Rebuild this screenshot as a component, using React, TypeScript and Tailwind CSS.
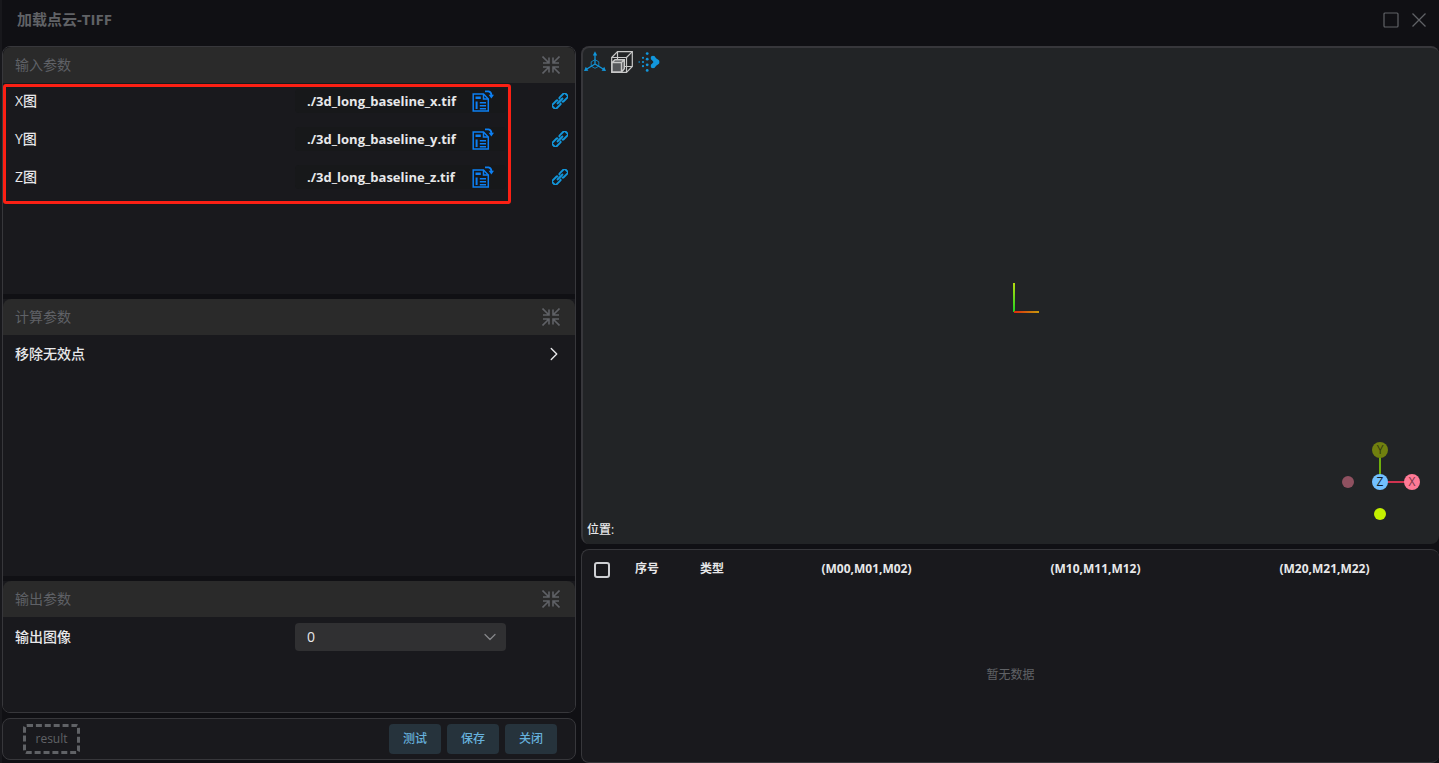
import { useState } from 'react';
import type { ReactNode } from 'react';
import { ChevronDown, ChevronRight } from 'lucide-react';

const inputFiles = [
    { id: 'x', label: 'X图', path: './3d_long_baseline_x.tif' },
    { id: 'y', label: 'Y图', path: './3d_long_baseline_y.tif' },
    { id: 'z', label: 'Z图', path: './3d_long_baseline_z.tif' },
];

const matrixColumns = ['(M00,M01,M02)', '(M10,M11,M12)', '(M20,M21,M22)'];

const actions = ['测试', '保存', '关闭'];

function MaximizeIcon() {
    return (
        <svg width="16" height="16" viewBox="0 0 16 16" fill="none" stroke="currentColor" strokeWidth="1.2">
            <rect x="1" y="1" width="14" height="14" rx="1" />
        </svg>
    );
}

function CloseIcon() {
    return (
        <svg width="16" height="16" viewBox="0 0 16 16" fill="none" stroke="currentColor" strokeWidth="1.3">
            <path d="M1.5 1.5L14.5 14.5M14.5 1.5L1.5 14.5" />
        </svg>
    );
}

function CollapseIcon() {
    return (
        <svg width="18" height="18" viewBox="0 0 18 18" fill="none" stroke="currentColor" strokeWidth="1.6">
            <path d="M0.5 0.5L7 7M1 7H7V1.5" />
            <path d="M17.5 0.5L11 7M17 7H11V1.5" />
            <path d="M0.5 17.5L7 11M1 11H7V16.5" />
            <path d="M17.5 17.5L11 11M17 11H11V16.5" />
        </svg>
    );
}

function FileIcon() {
    return (
        <svg width="22" height="22" viewBox="0 0 22 22" fill="none" stroke="currentColor" strokeWidth="1.5">
            <path d="M1.2 4H11.5L16.3 9V21H1.2Z" />
            <path d="M11.5 4V9H16.3" />
            <path d="M3.5 7.8H8.8" strokeWidth="2.6" />
            <path d="M4.6 11.5V19" strokeWidth="2" />
            <path d="M7.8 12.7H14M7.8 15.7H14M7.8 18.7H14" strokeWidth="1.5" />
            <path d="M13 1.4H16.5Q19.3 2 19.5 5.5" strokeWidth="1.8" />
            <path d="M16.6 4.8H22L19.4 8.4Z" fill="currentColor" stroke="none" />
        </svg>
    );
}

function LinkIcon() {
    return (
        <svg width="16" height="16" viewBox="0 0 16 16" fill="none" stroke="currentColor" strokeWidth="1.9">
            <g transform="rotate(-45 8 8)">
                <path d="M6.6 6.6V6.2Q6.6 5.2 5.6 5.2H-0.2Q-1.2 5.2 -1.2 6.2V9.8Q-1.2 10.8 -0.2 10.8H5.6Q6.6 10.8 6.6 9.8V9.4" />
                <path d="M9.4 6.6V6.2Q9.4 5.2 10.4 5.2H16.2Q17.2 5.2 17.2 6.2V9.8Q17.2 10.8 16.2 10.8H10.4Q9.4 10.8 9.4 9.8V9.4" />
                <path d="M3.8 8H12.2" />
            </g>
        </svg>
    );
}

function AxesIcon() {
    return (
        <svg width="22" height="22" viewBox="0 0 22 22" fill="none" stroke="currentColor" strokeWidth="1.3">
            <path d="M11 13V3M11 13L2 18.5M11 13L20 18.5" />
            <path d="M7.2 10.8L11 8.7L14.8 10.8V15.2L11 17.3L7.2 15.2Z" strokeWidth="0.8" />
            <path d="M11 0.3L13.2 4.4H8.8Z" fill="currentColor" stroke="none" />
            <path d="M0 20L1.8 15.8L4.4 19.8Z" fill="currentColor" stroke="none" />
            <path d="M22 20L20.2 15.8L17.6 19.8Z" fill="currentColor" stroke="none" />
        </svg>
    );
}

function CubeIcon() {
    return (
        <svg width="22" height="22" viewBox="0 0 22 22" fill="none" stroke="currentColor" strokeWidth="1.2">
            <path d="M0.7 6.5L6.5 0.7H21.3V15.5L15.5 21.3H0.7Z" />
            <path d="M0.7 6.5H15.5V21.3M15.5 6.5L21.3 0.7M6.5 0.7V9M21.3 15.5H13.5" />
            <path
                d="M1 11.5H10.5V21H1ZM1 11.5L4 8.7H13.3V17.8L10.5 21M10.5 11.5L13.3 8.7"
                fill="#55575a"
                strokeWidth="1.4"
            />
        </svg>
    );
}

function PointsIcon() {
    return (
        <svg width="22" height="22" viewBox="0 0 22 22" fill="currentColor">
            <circle cx="1.2" cy="11" r="0.8" />
            <circle cx="5" cy="6.8" r="1.1" />
            <circle cx="5" cy="11" r="1.1" />
            <circle cx="5" cy="15.2" r="1.1" />
            <circle cx="9.2" cy="2.6" r="1.4" />
            <circle cx="9.2" cy="8.2" r="1.4" />
            <circle cx="9.2" cy="13.8" r="1.4" />
            <circle cx="9.2" cy="19.4" r="1.4" />
            <circle cx="15" cy="7" r="2.3" />
            <circle cx="15" cy="15" r="2.3" />
            <circle cx="18.6" cy="11" r="2.8" />
            <path d="M13.5 8.5L16.5 5.5L20 9V13L16.5 16.5L13.5 13.5L15.5 11Z" />
        </svg>
    );
}

// 右下角的方向指示器
function OrientationGizmo() {
    return (
        <svg
            className="absolute bottom-5 right-4 font-['Open_Sans',sans-serif] text-[12px]"
            width="84"
            height="84"
            viewBox="0 0 84 84"
            textAnchor="middle"
        >
            <path d="M41 42V12" stroke="#6fae0c" strokeWidth="2" />
            <path d="M41 42H73" stroke="#cf3350" strokeWidth="2" />
            <circle cx="41" cy="10" r="8" fill="#71800f" />
            <circle cx="73" cy="42" r="8" fill="#ff7a96" />
            <circle cx="41" cy="42" r="8" fill="#72c0ff" />
            <circle cx="9" cy="42" r="6" fill="#8f5160" />
            <circle cx="41" cy="74" r="6" fill="#c4f000" />
            <text x="41" y="14" fill="#343b10">Y</text>
            <text x="73" y="46" fill="#7a3545">X</text>
            <text x="41" y="46" fill="#111c28">Z</text>
        </svg>
    );
}

function OriginAxes() {
    return (
        <svg width="60" height="60" viewBox="0 0 60 60">
            <defs>
                <linearGradient id="axisY" x1="0" y1="1" x2="0" y2="0">
                    <stop offset="0" stopColor="#21d321" />
                    <stop offset="1" stopColor="#b5dc10" />
                </linearGradient>
                <linearGradient id="axisX" x1="0" y1="0" x2="1" y2="0">
                    <stop offset="0" stopColor="#dc2a0c" />
                    <stop offset="1" stopColor="#c79a0c" />
                </linearGradient>
            </defs>
            <rect x="32" y="17" width="2" height="29" fill="url(#axisY)" />
            <rect x="33" y="45" width="25" height="2" fill="url(#axisX)" />
        </svg>
    );
}

interface SectionProps {
    title: string;
    children: ReactNode;
}

function Section({ title, children }: SectionProps) {
    return (
        <section className="bg-[#19191d]">
            <div className="flex h-9 items-center justify-between rounded-t-lg bg-[#2a2a2a] pl-3 pr-[15px] text-[#5f6166]">
                <h2 className="text-sm">{title}</h2>
                <button type="button" aria-label={`折叠${title}`}>
                    <CollapseIcon />
                </button>
            </div>
            {children}
        </section>
    );
}

export default function App() {
    const [output, setOutput] = useState('0');

    return (
        <div className="flex min-h-screen flex-col border-l-2 border-[#18181c] bg-[#101014] font-['Open_Sans','Noto_Sans_CJK_SC',sans-serif] text-sm text-[#e8e8ea]">
            <header className="flex h-[46px] items-center justify-between pb-1.5 pl-[15px] pr-3 text-[#606266]">
                <h1 className="text-[15px] font-bold">加载点云-TIFF</h1>
                <div className="flex items-center gap-3">
                    <button type="button" aria-label="最大化">
                        <MaximizeIcon />
                    </button>
                    <button type="button" aria-label="关闭窗口">
                        <CloseIcon />
                    </button>
                </div>
            </header>

            <main className="flex flex-1 gap-[5px]">
                {/* 左侧参数区 */}
                <div className="flex w-2/5 max-w-[574px] flex-col gap-[5px] pb-[3px]">
                    <div className="grid flex-1 grid-rows-[247fr_277fr_131fr] gap-[5px] overflow-hidden rounded-lg border border-[#37373b]">
                        <Section title="输入参数">
                            <div className="relative flex flex-col gap-0.5">
                                {inputFiles.map((file) => (
                                    <div
                                        key={file.id}
                                        className="grid h-9 grid-cols-[1fr_211px_62px] items-center pl-3 pr-[7px]"
                                    >
                                        <label htmlFor={`file-${file.id}`} className="font-medium">
                                            {file.label}
                                        </label>
                                        <div className="flex h-6 items-center rounded bg-[#17181a] pl-3 pr-3">
                                            <input
                                                id={`file-${file.id}`}
                                                type="text"
                                                readOnly
                                                value={file.path}
                                                className="min-w-0 flex-1 bg-transparent text-[13px] font-bold outline-none"
                                            />
                                            <button type="button" aria-label="选择文件" className="text-[#0d7ff2]">
                                                <FileIcon />
                                            </button>
                                        </div>
                                        <button
                                            type="button"
                                            aria-label="链接"
                                            className="justify-self-end text-[#1296db]"
                                        >
                                            <LinkIcon />
                                        </button>
                                    </div>
                                ))}
                                {/* 红色标注框 */}
                                <div className="pointer-events-none absolute -bottom-[9px] left-0 right-16 top-px rounded-[3px] border-[3px] border-[#fb2014]" />
                            </div>
                        </Section>

                        <Section title="计算参数">
                            <button
                                type="button"
                                className="flex h-[38px] w-full items-center justify-between pl-3 pr-2.5 font-medium"
                            >
                                移除无效点
                                <ChevronRight size={22} strokeWidth={1.5} />
                            </button>
                        </Section>

                        <Section title="输出参数">
                            <div className="grid h-10 grid-cols-[1fr_211px_62px] items-center pl-3 pr-[7px]">
                                <label htmlFor="output" className="font-medium">
                                    输出图像
                                </label>
                                <div className="relative">
                                    <select
                                        id="output"
                                        value={output}
                                        onChange={(e) => setOutput(e.target.value)}
                                        className="h-7 w-full appearance-none rounded bg-[#303032] px-3 font-medium outline-none"
                                    >
                                        <option value="0">0</option>
                                        <option value="1">1</option>
                                    </select>
                                    <ChevronDown
                                        size={20}
                                        strokeWidth={1.5}
                                        className="pointer-events-none absolute right-1.5 top-1 text-[#85868a]"
                                    />
                                </div>
                            </div>
                        </Section>
                    </div>

                    <footer className="flex h-[42px] items-center justify-between rounded-lg border border-[#37373b] bg-[#19191d] pl-5 pr-[18px] text-xs">
                        <span className="flex h-[30px] w-[57px] items-center justify-center rounded border-3 border-dashed border-[#606266] text-[#606266]">
                            result
                        </span>
                        <div className="flex gap-1.5">
                            {actions.map((action) => (
                                <button
                                    key={action}
                                    type="button"
                                    className="h-[30px] w-[52px] rounded bg-[#26333c] font-medium text-[#66b1dc]"
                                >
                                    {action}
                                </button>
                            ))}
                        </div>
                    </footer>
                </div>

                {/* 右侧视图与矩阵表 */}
                <div className="flex flex-1 flex-col gap-[5px]">
                    <div className="relative flex flex-[7] flex-col justify-between rounded-lg border-l-2 border-t-2 border-[#37373b] bg-[#222426]">
                        <div className="flex gap-[5px] pl-px pt-[3px] text-[#1296db]">
                            <button type="button" aria-label="坐标轴">
                                <AxesIcon />
                            </button>
                            <button type="button" aria-label="包围盒" className="text-[#c8c8c8]">
                                <CubeIcon />
                            </button>
                            <button type="button" aria-label="点大小">
                                <PointsIcon />
                            </button>
                        </div>
                        <div className="pointer-events-none absolute inset-0 flex items-center justify-center">
                            <OriginAxes />
                        </div>
                        <OrientationGizmo />
                        <p className="pb-1.5 pl-1 text-xs font-medium">位置:</p>
                    </div>

                    <div className="flex flex-[3] flex-col rounded-lg border border-r-0 border-[#37373b] bg-[#19191d] text-xs">
                        <table className="w-full table-fixed">
                            <thead>
                                <tr className="h-[38px]">
                                    <th className="w-10">
                                        <input
                                            type="checkbox"
                                            aria-label="全选"
                                            className="mx-auto mt-0.5 block size-4 appearance-none rounded-[3px] border-2 border-[#cfd0d4]"
                                        />
                                    </th>
                                    <th className="w-[50px]">序号</th>
                                    <th className="w-20">类型</th>
                                    {matrixColumns.map((column) => (
                                        <th key={column}>{column}</th>
                                    ))}
                                </tr>
                            </thead>
                        </table>
                        <p className="flex flex-1 items-center justify-center text-[#606266]">暂无数据</p>
                    </div>
                </div>
            </main>
        </div>
    );
}
